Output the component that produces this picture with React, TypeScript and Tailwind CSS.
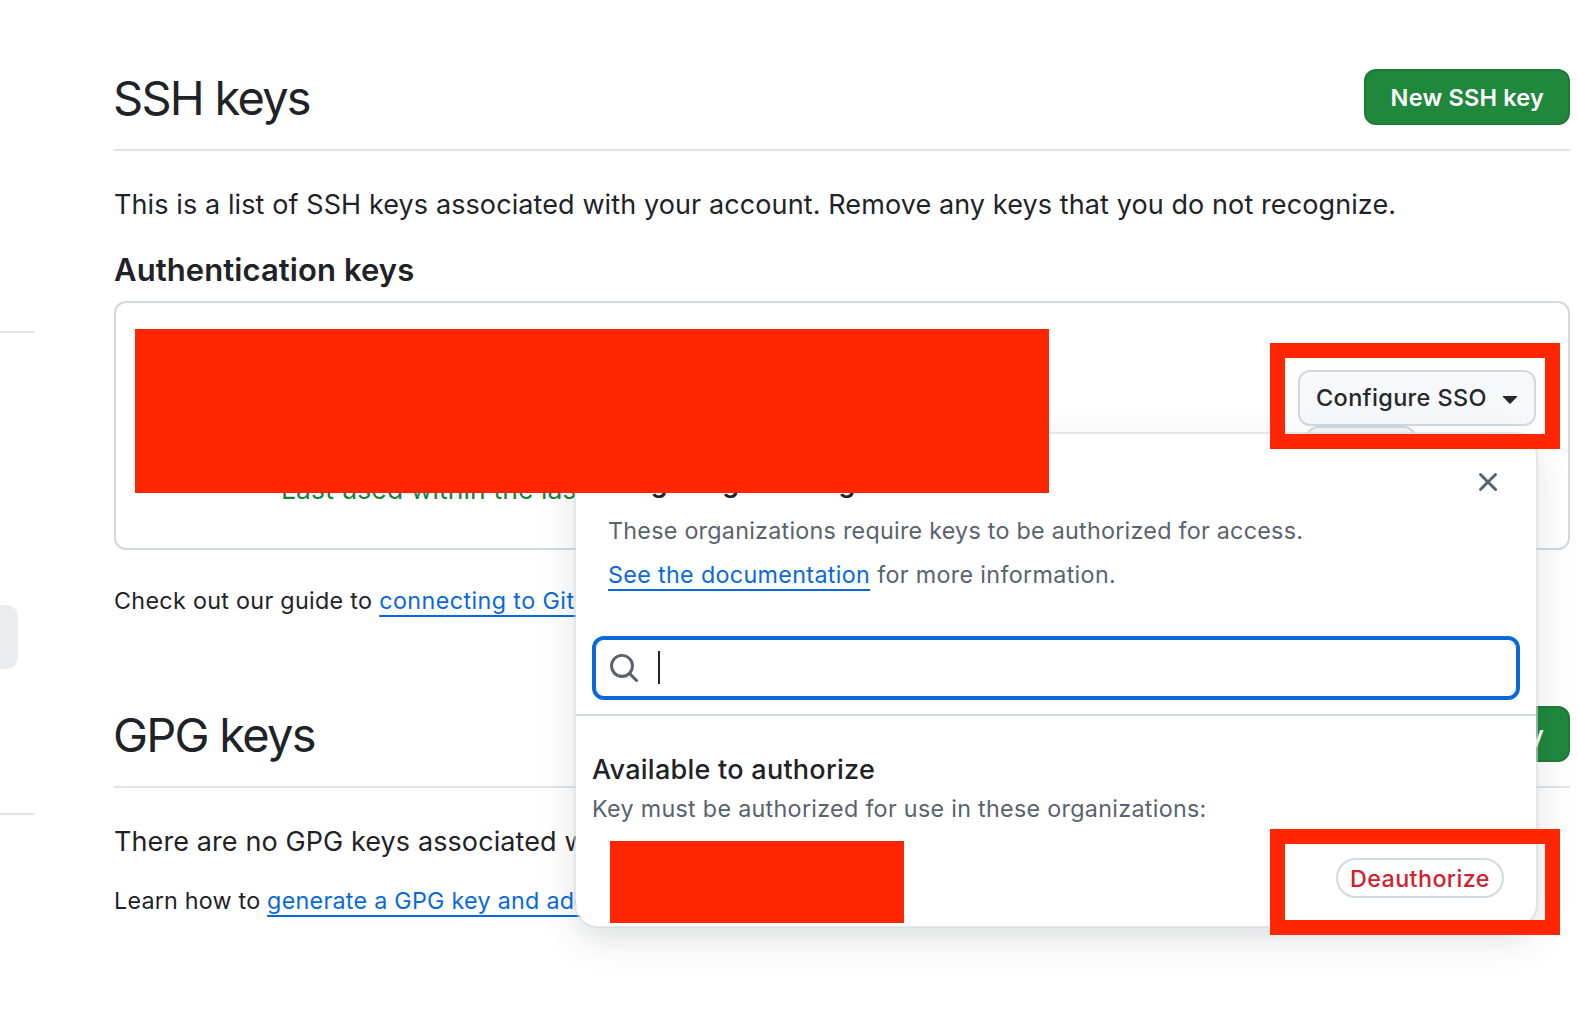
import type { ReactNode } from "react";

function SearchIcon() {
  return (
    <svg viewBox="0 0 16 16" className="size-8 fill-[#59636e]" aria-hidden="true">
      <path d="M10.68 11.74a6 6 0 0 1-7.922-8.982 6 6 0 0 1 8.982 7.922l3.04 3.04a.749.749 0 0 1-.326 1.275.749.749 0 0 1-.734-.215ZM11.5 7a4.499 4.499 0 1 0-8.997 0A4.499 4.499 0 0 0 11.5 7Z" />
    </svg>
  );
}

function CloseIcon() {
  return (
    <svg viewBox="0 0 16 16" className="size-8 fill-[#59636e]" aria-hidden="true">
      <path d="M3.72 3.72a.75.75 0 0 1 1.06 0L8 6.94l3.22-3.22a.749.749 0 0 1 1.275.326.749.749 0 0 1-.215.734L9.06 8l3.22 3.22a.749.749 0 0 1-.326 1.275.749.749 0 0 1-.734-.215L8 9.06l-3.22 3.22a.751.751 0 0 1-1.042-.018.751.751 0 0 1-.018-1.042L6.94 8 3.72 4.78a.75.75 0 0 1 0-1.06Z" />
    </svg>
  );
}

function CaretIcon() {
  return (
    <svg viewBox="0 0 16 16" className="size-8 fill-[#25292e]" aria-hidden="true">
      <path d="m4.427 7.427 3.396 3.396a.25.25 0 0 0 .354 0l3.396-3.396A.25.25 0 0 0 11.396 7H4.604a.25.25 0 0 0-.177.427Z" />
    </svg>
  );
}

function Link({ children }: { children: ReactNode }) {
  return (
    <a
      href="#"
      className="text-[#0969da] underline decoration-2 underline-offset-[6px] [text-decoration-skip-ink:none]"
    >
      {children}
    </a>
  );
}

function SectionHeader({ title, action }: { title: string; action: string }) {
  return (
    <header className="flex h-[82px] items-start justify-between border-b-2 border-[#d1d9e0]/70">
      <h1 className="-ml-px text-[47px] leading-[58px] tracking-[-1.75px]">{title}</h1>
      <button className="h-14 rounded-xl border-2 border-[#1f7a38] bg-[#1f883d] pt-0.5 pr-6 pl-[25px] text-[23.5px] font-semibold tracking-[0.2px] text-white">
        {action}
      </button>
    </header>
  );
}

function Sidebar() {
  return (
    <aside className="w-[34px] shrink-0 pt-[331px]">
      <div className="h-0.5 bg-[#d1d9e0]/70" />
      <div className="mt-[272px] h-16 w-[18px] rounded-r-xl bg-[#ebecee]" />
      <div className="mt-[144px] h-0.5 bg-[#d1d9e0]/70" />
    </aside>
  );
}

function SsoPanel() {
  return (
    <section className="absolute top-[432px] left-[574px] h-[496px] w-[964px] rounded-3xl border-2 border-[#d1d9e0]/60 bg-white bg-clip-padding shadow-[0_12px_24px_-6px_#25292e0a,0_12px_36px_0_#25292e1f]">
      <div className="flex items-start justify-between px-8 pt-7">
        <div>
          <h2 className="text-[27px] leading-[42px] font-semibold tracking-[0.5px]">Single sign-on organizations</h2>
          <p className="mt-[5px] text-[23.3px] leading-[44px] tracking-[0.26px] text-[#59636e]">
            These organizations require keys to be authorized for access.
          </p>
          <p className="text-[23.3px] leading-[44px] tracking-[0.34px] text-[#59636e]">
            <Link>See the documentation</Link> for more information.
          </p>
        </div>
        <button className="mt-1 size-8">
          <CloseIcon />
        </button>
      </div>
      <div className="mx-4 mt-[39px] flex h-16 items-center rounded-xl border-4 border-[#0969da] pl-3">
        <SearchIcon />
        <span className="mb-px ml-[18px] h-[33px] w-0.5 bg-[#1f2328]" />
      </div>
      <div className="mt-3.5 h-0.5 bg-[#d1d9e0]" />
      <h3 className="mt-[33px] pl-4 text-[27px] leading-[42px] font-medium tracking-[0.26px]">Available to authorize</h3>
      <p className="pl-4 text-[23.3px] leading-9 tracking-[0.3px] text-[#59636e]">
        Key must be authorized for use in these organizations:
      </p>
      <div className="mt-[31px] flex justify-end pr-8">
        <button className="h-10 w-[168px] rounded-full border-2 border-[#d1d9e0] pt-0.5 text-[23.3px] leading-[34px] font-medium tracking-[0.4px] text-[#cf222e]">
          Deauthorize
        </button>
      </div>
    </section>
  );
}

export default function App() {
  return (
    <div className="relative flex h-[1014px] w-[1578px] overflow-hidden bg-white font-['Inter',sans-serif] whitespace-nowrap text-[#1f2328]">
      <Sidebar />
      <main className="ml-20 w-[1456px] shrink-0 pt-[69px]">
        <SectionHeader title="SSH keys" action="New SSH key" />
        <p className="mt-[33px] text-[27px] leading-[42px] tracking-[0.1px]">
          This is a list of SSH keys associated with your account. Remove any keys that you do not recognize.
        </p>
        <h2 className="mt-5 text-[31px] leading-[48px] font-semibold tracking-[0.08px]">Authentication keys</h2>
        <div className="mt-[7px] flex h-[249px] items-start justify-between rounded-xl border-2 border-[#d1d9e0]">
          <p className="pt-[168px] pl-[165px] text-[26.5px] leading-9 tracking-[0.1px] text-[#1a7f37]">
            Last used within the last week
          </p>
          <div className="pt-[67px] pr-8">
            <button className="flex h-14 w-[238px] items-center rounded-xl border-2 border-[#d1d9e0] bg-[#f6f8fa] pl-4 text-[23.5px] font-medium tracking-[0.35px] text-[#25292e]">
              Configure SSO
              <span className="ml-[7px]">
                <CaretIcon />
              </span>
            </button>
            <button className="ml-2 block h-14 w-[110px] rounded-xl border-2 border-[#d1d9e0] bg-[#f6f8fa]" />
          </div>
        </div>
        <p className="mt-[33px] text-[23.3px] leading-9 tracking-[0.31px]">
          Check out our guide to{" "}
          <span className="tracking-[0.42px]">
            <Link>connecting to GitHub using SSH keys</Link>
          </span>
        </p>
        <div className="mt-[87px]">
          <SectionHeader title="GPG keys" action="New GPG key" />
        </div>
        <p className="mt-[33px] text-[27px] leading-[42px] tracking-[0.1px]">
          There are no GPG keys associated with your account.
        </p>
        <p className="mt-5 text-[23.3px] leading-9 tracking-[0.21px]">
          Learn how to{" "}
          <span className="tracking-[0.27px]">
            <Link>generate a GPG key and add it to your account</Link>
          </span>
        </p>
      </main>

      <SsoPanel />

      {/* Redaction blocks and highlight frames lie over the page. */}
      <div className="absolute top-[329px] left-[135px] h-[164px] w-[914px] bg-[#ff2600]" />
      <div className="absolute top-[841px] left-[610px] h-[82px] w-[294px] bg-[#ff2600]" />
      <div className="absolute top-[343px] left-[1270px] h-[106px] w-[290px] border-[15px] border-[#ff2600]" />
      <div className="absolute top-[829px] left-[1270px] h-[106px] w-[290px] border-[15px] border-[#ff2600]" />
    </div>
  );
}
